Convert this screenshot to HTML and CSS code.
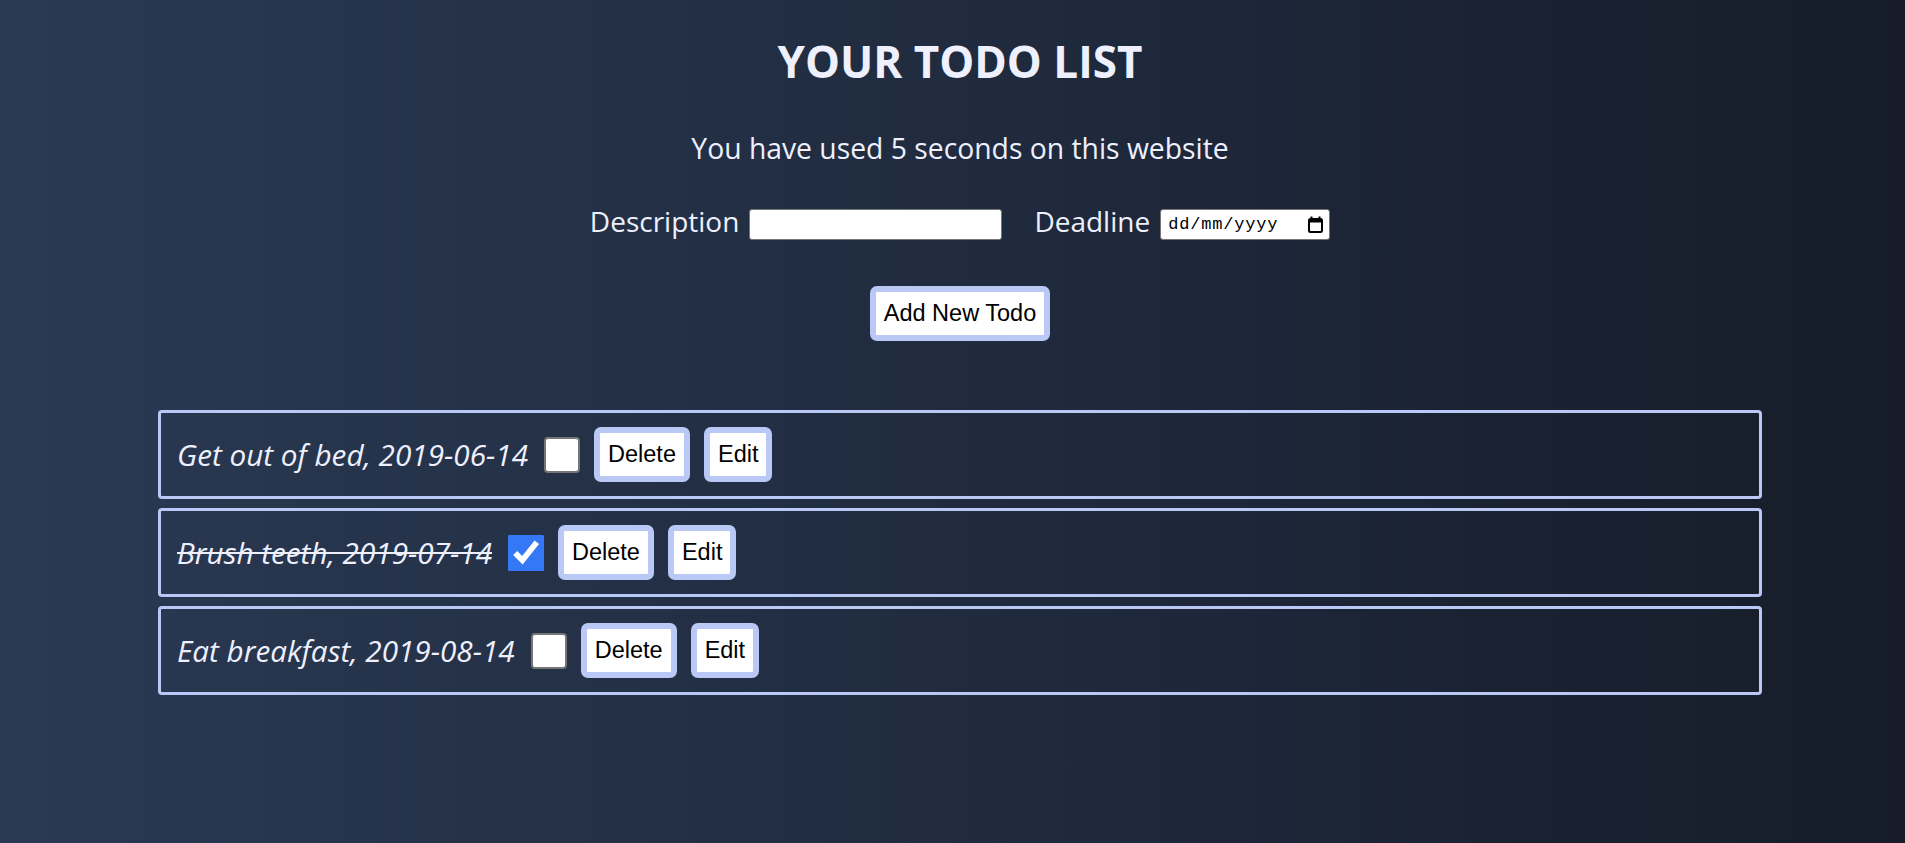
FILE: index.html
```html
<!DOCTYPE html>
<html lang="en">
<head>
<meta charset="utf-8">
<title>Todo List</title>
<link rel="stylesheet" href="styles.css">
</head>
<body>
<main class="app">
  <h1 class="title">YOUR TODO LIST</h1>
  <p class="timer">You have used 5 seconds on this website</p>
  <form class="todo-form">
    <div class="form-row">
      <label class="field">
        <span class="field-label">Description</span>
        <input type="text" class="desc-input">
      </label>
      <label class="field">
        <span class="field-label">Deadline</span>
        <span class="date-box">
          <input type="text" class="date-input" placeholder="dd/mm/yyyy">
          <svg class="date-icon" width="15" height="17" viewBox="0 0 15 17" aria-hidden="true">
            <path d="M3.5 0.5v3M11.5 0.5v3" stroke="#000" stroke-width="2"/>
            <rect x="1" y="3" width="13" height="13" rx="1.5" fill="none" stroke="#000" stroke-width="2"/>
            <rect x="1" y="3" width="13" height="3.5" fill="#000"/>
          </svg>
        </span>
      </label>
    </div>
    <button type="button" class="btn btn-add">Add New Todo</button>
  </form>
  <ul class="todo-list">
    <li class="todo">
      <span class="todo-text">Get out of bed, 2019-06-14</span>
      <input type="checkbox" class="todo-check">
      <button type="button" class="btn">Delete</button>
      <button type="button" class="btn">Edit</button>
    </li>
    <li class="todo">
      <span class="todo-text done">Brush teeth, 2019-07-14</span>
      <input type="checkbox" class="todo-check" checked>
      <button type="button" class="btn">Delete</button>
      <button type="button" class="btn">Edit</button>
    </li>
    <li class="todo">
      <span class="todo-text">Eat breakfast, 2019-08-14</span>
      <input type="checkbox" class="todo-check">
      <button type="button" class="btn">Delete</button>
      <button type="button" class="btn">Edit</button>
    </li>
  </ul>
</main>
</body>
</html>
```

FILE: styles.css
```css
* {
  box-sizing: border-box;
}

html,
body {
  margin: 0;
}

body {
  min-height: 100vh;
  padding-left: 15px;
  background: linear-gradient(to right, #2a3a53 0%, #202b3f 50%, #161c29 100%);
  color: #eef0fe;
  font-family: "Open Sans", "Noto Sans", sans-serif;
}

.app {
  display: flex;
  flex-direction: column;
  align-items: center;
  padding-top: 31px;
}

.title {
  margin: 0;
  font-size: 44px;
  font-weight: 700;
  line-height: normal;
}

.timer {
  margin: 38px 0 0;
  font-size: 28.3px;
  line-height: normal;
}

.todo-form {
  display: flex;
  flex-direction: column;
  align-items: center;
  margin-top: 35px;
}

.form-row {
  display: flex;
  align-items: center;
  gap: 32px;
}

.field {
  display: flex;
  align-items: center;
  gap: 10px;
  font-size: 28px;
}

.field-label {
  padding-bottom: 6px;
}

.desc-input {
  width: 253px;
  height: 31px;
  padding: 2px 5px;
  border: 1px solid #767676;
  border-radius: 3px;
  background: #fff;
  font: 16px "Liberation Sans", sans-serif;
}

.date-box {
  display: flex;
  align-items: center;
  justify-content: space-between;
  width: 170px;
  height: 31px;
  padding: 0 6px 0 7px;
  border: 1px solid #767676;
  border-radius: 3px;
  background: #fff;
}

.date-input {
  width: 122px;
  padding: 0;
  border: 0;
  background: transparent;
  font: 17px "Liberation Mono", monospace;
  letter-spacing: 0.8px;
  color: #000;
}

.date-input::placeholder {
  color: #000;
  opacity: 1;
}

.date-icon {
  display: block;
}

.btn {
  padding: 8px;
  border: 6px solid #b9c8f5;
  border-radius: 7px;
  background: #fff;
  color: #000;
  font: 23.5px "Liberation Sans", Arial, sans-serif;
  line-height: 1.15;
}

.btn-add {
  margin-top: 40px;
}

.todo-list {
  display: flex;
  flex-direction: column;
  gap: 9px;
  width: 1604px;
  margin: 69px 0 0;
  padding: 0;
  list-style: none;
}

.todo {
  display: flex;
  align-items: center;
  gap: 14px;
  height: 89px;
  padding: 0 16px;
  border: 3px solid #b9c8f5;
  border-radius: 4px;
}

.todo-text {
  margin-right: 2px;
  font-size: 29.7px;
  font-style: italic;
}

.todo-text.done {
  text-decoration: line-through;
}

.todo-check {
  width: 36px;
  height: 36px;
  margin: 0;
  accent-color: #3478f6;
}

.todo-check:not(:checked) {
  appearance: none;
  border: 2px solid #767676;
  border-radius: 4px;
  background: #fff;
}
```
